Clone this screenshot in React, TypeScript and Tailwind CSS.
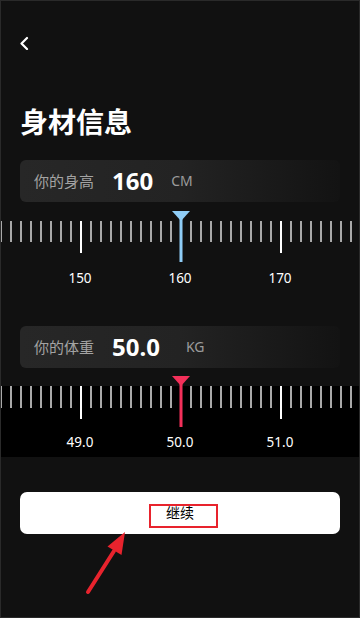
import React from "react";

function Ticks({ top, tickH, longH, lineH, color, bg }: { top: number; tickH: number; longH: number; lineH: number; color: string; bg?: string }) {
  const ticks = [];
  for (let k = 0; k <= 36; k++) {
    if (k === 18) continue;
    const long = k === 8 || k === 28;
    ticks.push(
      <rect key={k} x={10 * k - 1} y={top} width={2} height={long ? longH : tickH} fill={long ? "#ffffff" : "#a9a9a9"} />
    );
  }
  return (
    <svg width={360} height={lineH + 1} viewBox={`0 0 360 ${lineH + 1}`} className="block">
      {bg && <rect x={0} y={top} width={360} height={lineH + 1 - top} fill={bg} />}
      {ticks}
      <polygon points={`171,0 189,0 180,${top}`} fill={color} />
      <rect x={178.5} y={0} width={3} height={lineH} fill={color} />
    </svg>
  );
}

function Card({ label, value, unit, unitGap }: { label: string; value: string; unit: string; unitGap: string }) {
  return (
    <div className="mx-[19px] h-[42px] rounded-[6px] bg-gradient-to-r from-[#272727] via-[#232323] to-[#131313] flex items-center pl-[14px]">
      <span className="text-[15px] text-[#a3a3a3] leading-none">{label}</span>
      <span className="ml-[18px] text-[24px] font-bold text-white leading-none">{value}</span>
      <span className={`${unitGap} text-[14px] text-[#9c9c9c] leading-none`}>{unit}</span>
    </div>
  );
}

function Labels({ items, className }: { items: string[]; className: string }) {
  return (
    <div className={className}>
      <div className="grid grid-cols-3 w-[300px] ml-[29px] text-center text-[13.5px] text-white leading-[16px]">
        {items.map((t) => (
          <span key={t}>{t}</span>
        ))}
      </div>
    </div>
  );
}

export default function App() {
  return (
    <div className="w-[360px] h-[618px] bg-[#111111] border border-[#2a2a2a] flex flex-col relative overflow-hidden font-['Noto_Sans','Noto_Sans_CJK_SC',sans-serif]">
      <div className="mt-[35px] pl-[17px] h-[14px]">
        <svg width="12" height="14" viewBox="0 0 12 14" className="block">
          <path d="M9 2 L3.5 7.5 L9 13" fill="none" stroke="#ffffff" strokeWidth="2.2" strokeLinecap="round" strokeLinejoin="round" />
        </svg>
      </div>
      <h1 className="mt-[58px] pl-[19px] text-[28px] leading-[28px] font-bold text-white">身材信息</h1>

      <div className="mt-[24px]">
        <Card label="你的身高" value="160" unit="CM" unitGap="ml-[18px]" />
      </div>
      <div className="mt-[9px]">
        <Ticks top={10} tickH={21} longH={32} lineH={51} color="#8fcdf7" />
      </div>
      <Labels items={["150", "160", "170"]} className="mt-[7px]" />

      <div className="mt-[40px]">
        <Card label="你的体重" value="50.0" unit="KG" unitGap="ml-[26px]" />
      </div>
      <div className="mt-[8px]">
        <Ticks top={10} tickH={22} longH={33} lineH={51} color="#f3305a" bg="#000000" />
      </div>
      <Labels items={["49.0", "50.0", "51.0"]} className="bg-black h-[29px] pt-[6px]" />

      <div className="mt-[35px] mx-[19px] h-[42px] rounded-[7px] bg-white flex items-center justify-center">
        <span className="text-[14px] text-black leading-none">继续</span>
      </div>

      <div className="absolute left-[148px] top-[503px] w-[69px] h-[24px] border-[2.5px] border-[#e8232d]" />
      <svg className="absolute left-0 top-0 pointer-events-none" width="360" height="618" viewBox="0 0 360 618">
        <line x1="87" y1="591" x2="113" y2="550" stroke="#e8232d" strokeWidth="4" strokeLinecap="round" />
        <polygon points="124,531 120.5,554 106.5,545.5" fill="#e8232d" />
      </svg>
    </div>
  );
}
